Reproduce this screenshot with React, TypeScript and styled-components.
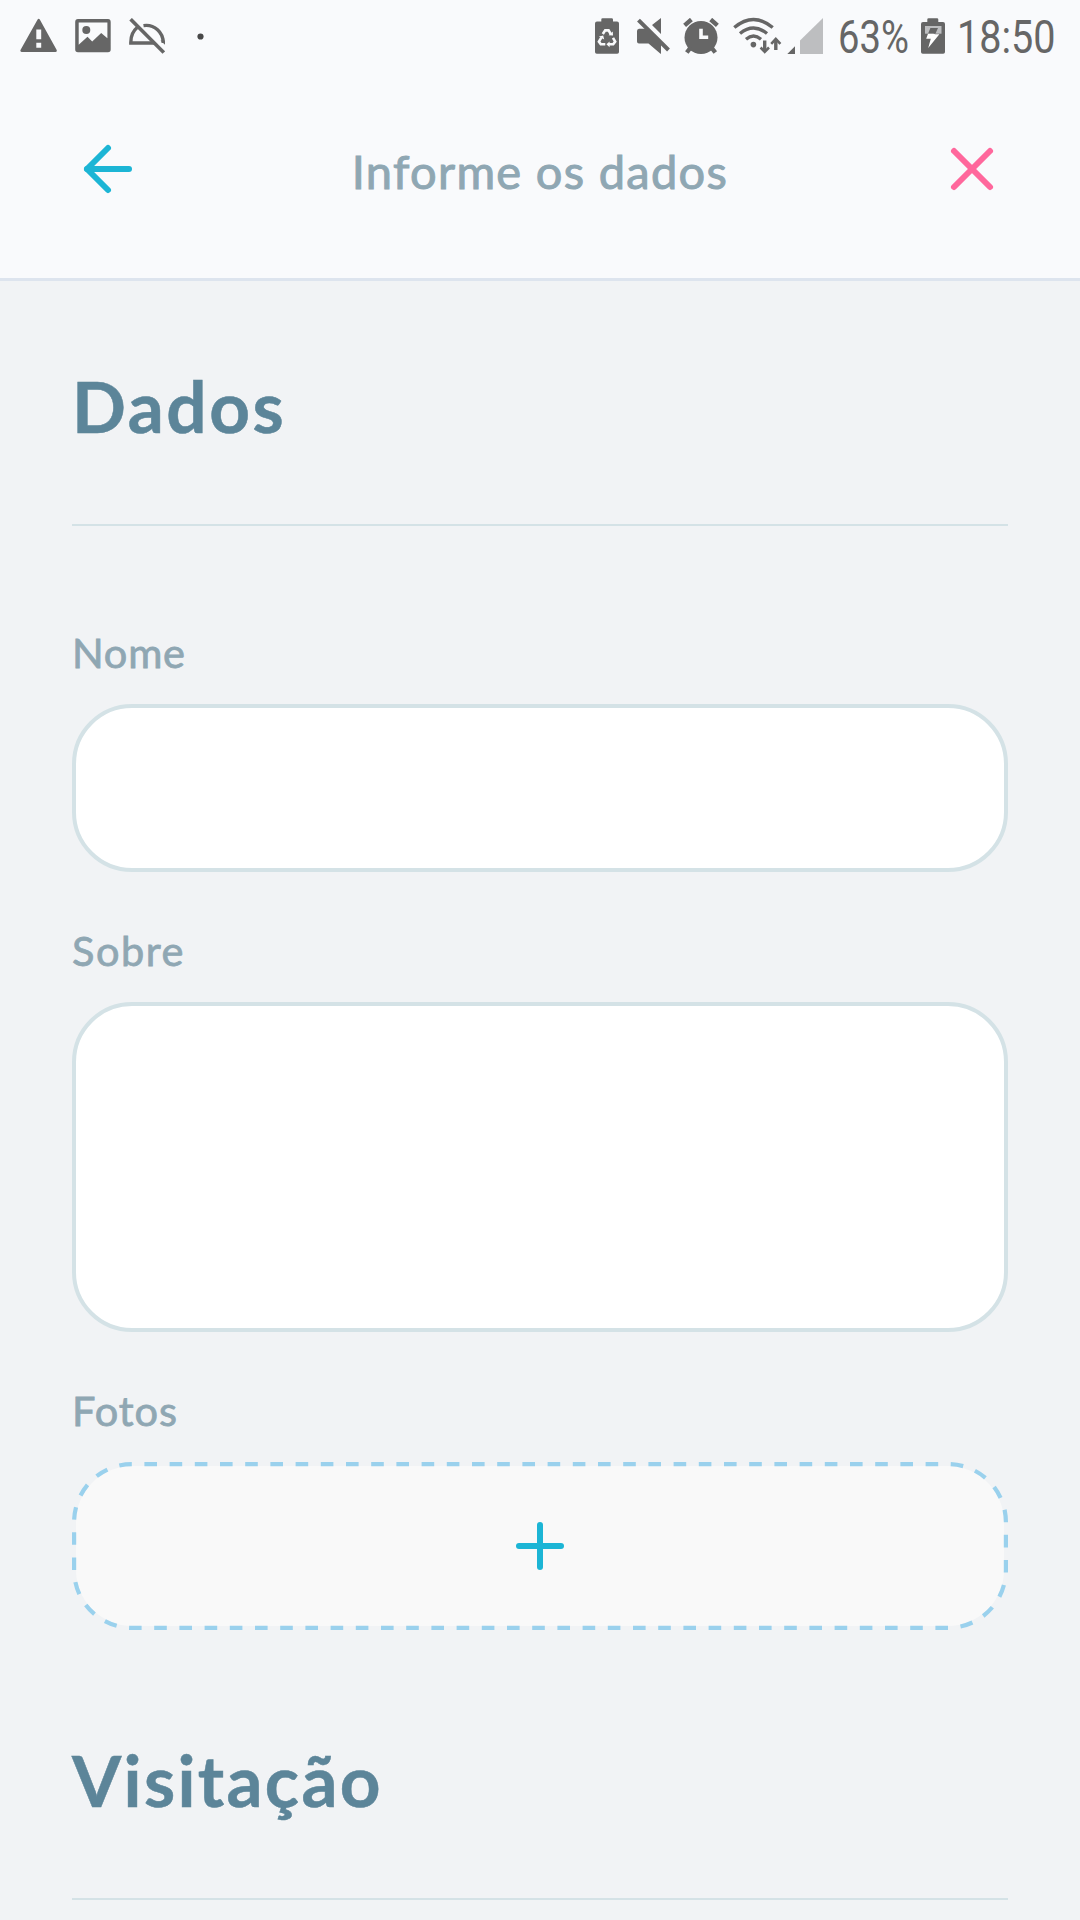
import React from "react";
import styled, { createGlobalStyle } from "styled-components";
import { ArrowLeft, Plus, X } from "lucide-react";

const GlobalStyle = createGlobalStyle`
  * { box-sizing: border-box; }
  html, body { margin: 0; padding: 0; background: #f1f3f5; }
  body { font-family: Lato, "Open Sans", sans-serif; }
`;

const Screen = styled.div`
  width: 1080px;
  height: 1920px;
  overflow: hidden;
  background: #f1f3f5;
`;

const TopArea = styled.div`
  height: 281px;
  background: #f9fafc;
  border-bottom: 3px solid #dde4ee;
`;

const StatusBar = styled.div`
  display: flex;
  align-items: center;
  justify-content: space-between;
  height: 72px;
  padding: 0 25px 0 20px;
  color: #666666;
`;

const StatusGroup = styled.div`
  display: flex;
  align-items: center;
`;

const Glyph = styled.svg<{ $gap?: number }>`
  display: block;
  flex: none;
  margin-left: ${(p) => p.$gap ?? 0}px;
  fill: currentColor;
`;

const StatusText = styled.span<{ $gap: number; $width: number; $scale: number }>`
  display: block;
  width: ${(p) => p.$width}px;
  margin-left: ${(p) => p.$gap}px;
  font-family: Roboto, sans-serif;
  font-size: 46px;
  line-height: 72px;
  white-space: nowrap;
  transform: translateY(1px) scaleX(${(p) => p.$scale});
  transform-origin: left center;
`;

const NavBar = styled.header`
  display: flex;
  align-items: center;
  justify-content: space-between;
  height: 194px;
  padding: 0 72px;
`;

const NavButton = styled.button<{ $color: string }>`
  display: flex;
  width: 72px;
  height: 72px;
  padding: 0;
  border: 0;
  background: none;
  color: ${(p) => p.$color};
`;

const NavTitle = styled.h1`
  margin: 3px 0 0;
  color: #8fa7b3;
  font-size: 47px;
  font-weight: 400;
  line-height: 60px;
  letter-spacing: 1.3px;
  -webkit-text-stroke: 1px currentColor;
  stroke-linejoin: round;
`;

const Content = styled.main`
  padding: 0 72px;
`;

const SectionTitle = styled.h2<{ $top: number; $spacing: number }>`
  height: ${(p) => p.$top}px;
  margin: 0;
  padding-top: ${(p) => p.$top - 165.5}px;
  border-bottom: 2px solid #d4e2e6;
  color: #5c8599;
  font-size: 71px;
  font-weight: 700;
  line-height: 90px;
  letter-spacing: ${(p) => p.$spacing}px;
  -webkit-text-stroke: 0.5px currentColor;
  stroke-linejoin: round;
`;

const Field = styled.div<{ $top: number }>`
  padding-top: ${(p) => p.$top}px;
`;

const Label = styled.label<{ $spacing: number }>`
  display: block;
  height: 80px;
  color: #8fa7b3;
  font-size: 41.5px;
  line-height: 57px;
  letter-spacing: ${(p) => p.$spacing}px;
  -webkit-text-stroke: 0.8px currentColor;
  stroke-linejoin: round;
`;

const Input = styled.input`
  display: block;
  width: 100%;
  height: 168px;
  padding: 0 48px;
  border: 4px solid #d4e2e6;
  border-radius: 60px;
  outline: 0;
  background: #ffffff;
`;

const TextArea = styled.textarea`
  display: block;
  width: 100%;
  height: 330px;
  padding: 40px 48px;
  border: 4px solid #d4e2e6;
  border-radius: 60px;
  outline: 0;
  resize: none;
  background: #ffffff;
`;

const Upload = styled.button`
  position: relative;
  display: flex;
  align-items: center;
  justify-content: center;
  width: 100%;
  height: 168px;
  padding: 0;
  border: 4px solid transparent;
  border-radius: 60px;
  background: #f9f9f9;
  background-clip: padding-box;
  color: #1cb5d5;
`;

const DashedOutline = styled.svg`
  position: absolute;
  top: -4px;
  left: -4px;
  fill: none;
  stroke: #9ad1ed;
  stroke-width: 4.2px;
  stroke-dasharray: 12.6 12.6;
`;

export default function App() {
  return (
    <>
      <GlobalStyle />
      <Screen>
        <TopArea>
          <StatusBar>
            <StatusGroup>
              <Glyph width="37" height="36" viewBox="20 18 37 36">
                <path
                  fillRule="evenodd"
                  d="M37.6 19.4Q38.7 18.3 39.8 19.4L56.7 50Q57.2 52 55.4 52H21.6Q19.9 51.8 20.5 50ZM36.3 29.5V39.3H41.2V29.5ZM36.3 42.8V47.8H41.2V42.8Z"
                />
              </Glyph>
              <Glyph $gap={18} width="36" height="36" viewBox="75 18 36 36">
                <path
                  fillRule="evenodd"
                  d="M78 19H108Q110.7 19 110.7 22V49.5Q110.7 52.3 108 52.3H78Q75.2 52.3 75.2 49.5V22Q75.2 19 78 19ZM78.7 22.4V44.8L87.5 36.8L92.2 41.5L101.2 33L107.4 38.2V22.4Z"
                />
                <circle cx="86.3" cy="30" r="4" />
              </Glyph>
              <Glyph $gap={18} width="36" height="36" viewBox="129 18 36 36">
                <path
                  d="M137.2 27.5Q130.6 32.8 130.8 43H154M143.5 25.6C154.5 24 163.4 32.5 163.2 43"
                  fill="none"
                  stroke="currentColor"
                  strokeWidth="3.4"
                />
                <path d="M160.5 40.5H165V44.8Z" />
                <path
                  d="M130.6 19.2L163.8 52.6"
                  fill="none"
                  stroke="currentColor"
                  strokeWidth="3.6"
                />
              </Glyph>
              <Glyph $gap={32} width="7" height="7" viewBox="0 0 7 7">
                <circle cx="3.5" cy="3.5" r="3.1" fill="#484848" />
              </Glyph>
            </StatusGroup>
            <StatusGroup>
              <Glyph width="24" height="36" viewBox="595 18 24 36">
                <path d="M601.3 21.5V19.5Q601.3 18.2 602.6 18.2H611.6Q613 18.2 613 19.5V21.5H617Q619 21.5 619 23.5V52Q619 53.8 617.2 53.8H596.8Q595 53.8 595 52V23.5Q595 21.5 597 21.5Z" />
                <g fill="none" stroke="#f9fafc" strokeWidth="2.6">
                  <path d="M602.8 34L605.2 30.4H608.6L611 34.5" />
                  <path d="M613 37.8L615.2 41.6L613.2 44.3H609" />
                  <path d="M605.3 44.3H600.8L598.9 41.6L601.3 37.6" />
                </g>
                <path
                  fill="#f9fafc"
                  d="M608.6 35.3L613 35.5L612.8 31.4ZM609.6 41.4V47.2L606.4 44.3ZM598.9 36.4L603.2 35.4L604.2 39.6Z"
                />
              </Glyph>
              <Glyph $gap={18} width="33" height="36" viewBox="637 18 33 36">
                <path d="M661 18V34L652 25ZM640 28.8H647L661 42.8V53.8H660.5L648.5 43.5H639Q637 43.5 637 41.5V31Q637 29.2 639 28.8Z" />
                <path
                  d="M638.5 20.2L668.5 50"
                  fill="none"
                  stroke="currentColor"
                  strokeWidth="4"
                />
              </Glyph>
              <Glyph $gap={13} width="36" height="36" viewBox="683 18 36 36">
                <circle cx="701" cy="37.5" r="16.5" />
                <g fill="none" stroke="currentColor" strokeWidth="4.4">
                  <path d="M684.6 25.3L691.4 19.5M710.7 19.5L717.4 25.3M691 47L686.8 52.5M711 47L715.3 52.5" />
                </g>
                <path d="M701 28.7V37.3H708.2" fill="none" stroke="#f9fafc" strokeWidth="3.6" />
              </Glyph>
              <Glyph $gap={14} width="49" height="38" viewBox="733 16 49 38">
                <g fill="none" stroke="currentColor" strokeWidth="3.4">
                  <path d="M734.3 26.5Q753.5 10.5 772.7 26.5M740 32.5Q753.5 21.5 767 32.5M746 38.2Q753.5 32 761 38.2" />
                  <path d="M764.7 39.5V50M775.8 49V38.5" />
                </g>
                <circle cx="753.4" cy="43.6" r="2.8" />
                <path
                  d="M760.6 46.5L764.7 50.8L769 46.5M771.2 42.8L775.8 38L780.4 42.8"
                  fill="none"
                  stroke="currentColor"
                  strokeWidth="2.6"
                />
              </Glyph>
              <Glyph $gap={5} width="36" height="38" viewBox="787 16 36 38">
                <path d="M787.3 53L795 45.2V53Z" />
                <path d="M800 53V39.5L823 17V53Z" fill="#bdbec0" />
              </Glyph>
              <StatusText $gap={15} $width={83} $scale={0.83}>
                63%
              </StatusText>
              <Glyph width="24" height="36" viewBox="921 18 24 36">
                <path d="M927.3 22V19.5Q927.3 18.2 928.6 18.2H937Q938.3 18.2 938.3 19.5V22H943Q945 22 945 24V52Q945 53.8 943.2 53.8H922.8Q921 53.8 921 52V24Q921 22 923 22Z" />
                <path d="M925 26H941.5V33.7H925Z" fill="#bdbec0" />
                <path d="M930.4 28H938L935.4 33.7H928Z" />
                <path d="M928 33.7H933.2L935.4 34.2H939.4L928.2 48L930.8 38.7H926.2Z" fill="#ffffff" />
              </Glyph>
              <StatusText $gap={12} $width={98} $scale={0.86}>
                18:50
              </StatusText>
            </StatusGroup>
          </StatusBar>
          <NavBar>
            <NavButton $color="#1cb5d5" aria-label="Voltar">
              <ArrowLeft size={72} />
            </NavButton>
            <NavTitle>Informe os dados</NavTitle>
            <NavButton $color="#ff679c" aria-label="Fechar">
              <X size={72} />
            </NavButton>
          </NavBar>
        </TopArea>
        <Content>
          <SectionTitle $top={245} $spacing={2.6}>
            Dados
          </SectionTitle>
          <Field $top={98}>
            <Label $spacing={0.8} htmlFor="nome">
              Nome
            </Label>
            <Input id="nome" />
          </Field>
          <Field $top={50}>
            <Label $spacing={1.5} htmlFor="sobre">
              Sobre
            </Label>
            <TextArea id="sobre" />
          </Field>
          <Field $top={50}>
            <Label $spacing={1} as="div">
              Fotos
            </Label>
            <Upload aria-label="Adicionar foto">
              <DashedOutline width="936" height="168" viewBox="0 0 936 168">
                <path d="M2.1 108V60A57.9 57.9 0 0 1 60 2.1H876A57.9 57.9 0 0 1 933.9 60V108A57.9 57.9 0 0 1 876 165.9H60A57.9 57.9 0 0 1 2.1 108" />
              </DashedOutline>
              <Plus size={72} />
            </Upload>
          </Field>
          <SectionTitle $top={270} $spacing={2.3}>
            Visitação
          </SectionTitle>
        </Content>
      </Screen>
    </>
  );
}
